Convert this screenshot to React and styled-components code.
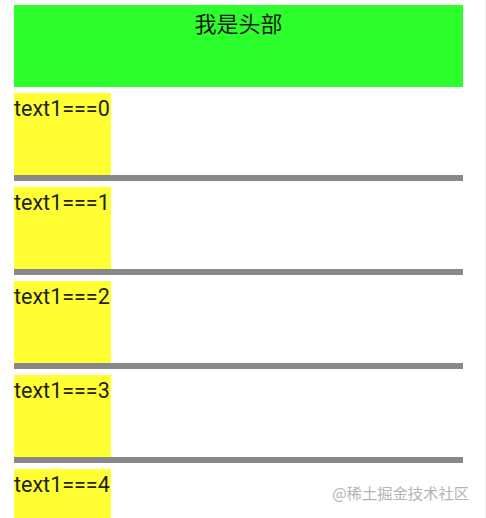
import React from 'react';
import styled, { createGlobalStyle } from 'styled-components';

const GlobalStyle = createGlobalStyle`
    html, body {
        margin: 0;
        padding: 0;
        background: #ffffff;
        overflow: hidden;
    }
    body {
        font-family: Roboto, "Noto Sans CJK SC", sans-serif;
    }
`;

const Page = styled.div`
    position: relative;
    width: 486px;
    height: 518px;
    padding: 5px 0 0 14px;
    box-sizing: border-box;
    overflow: hidden;
    border-right: 1px solid #f0f0f0;
`;

const Header = styled.div`
    width: 449px;
    height: 82px;
    margin-bottom: 6px;
    background: #2cff2c;
    color: #1a1a1a;
    font-size: 22px;
    line-height: 34px;
    text-align: center;
    font-family: "Noto Sans CJK SC", sans-serif;
`;

const List = styled.div`
    display: flex;
    flex-direction: column;
    gap: 6px;
`;

const Row = styled.div`
    width: 449px;
    height: 82px;
    border-bottom: ${p => (p.last ? 'none' : '6px solid #888888')};
`;

const Label = styled.div`
    width: 97px;
    height: 82px;
    background: #ffff33;
    color: #222222;
    font-size: 21.5px;
    line-height: 32px;
    white-space: nowrap;
`;

const Watermark = styled.div`
    position: absolute;
    right: 16px;
    bottom: 15px;
    color: #b4b4b4;
    font-size: 15.3px;
    font-family: "Noto Sans CJK SC", sans-serif;
`;

const App = () => {
    const items = [0, 1, 2, 3, 4];

    return (
        <>
            <GlobalStyle />
            <Page>
                <Header>我是头部</Header>
                <List>
                    {items.map(i => (
                        <Row key={i} last={i === items.length - 1}>
                            <Label>text1==={i}</Label>
                        </Row>
                    ))}
                </List>
                <Watermark>@稀土掘金技术社区</Watermark>
            </Page>
        </>
    );
};

export default App;
